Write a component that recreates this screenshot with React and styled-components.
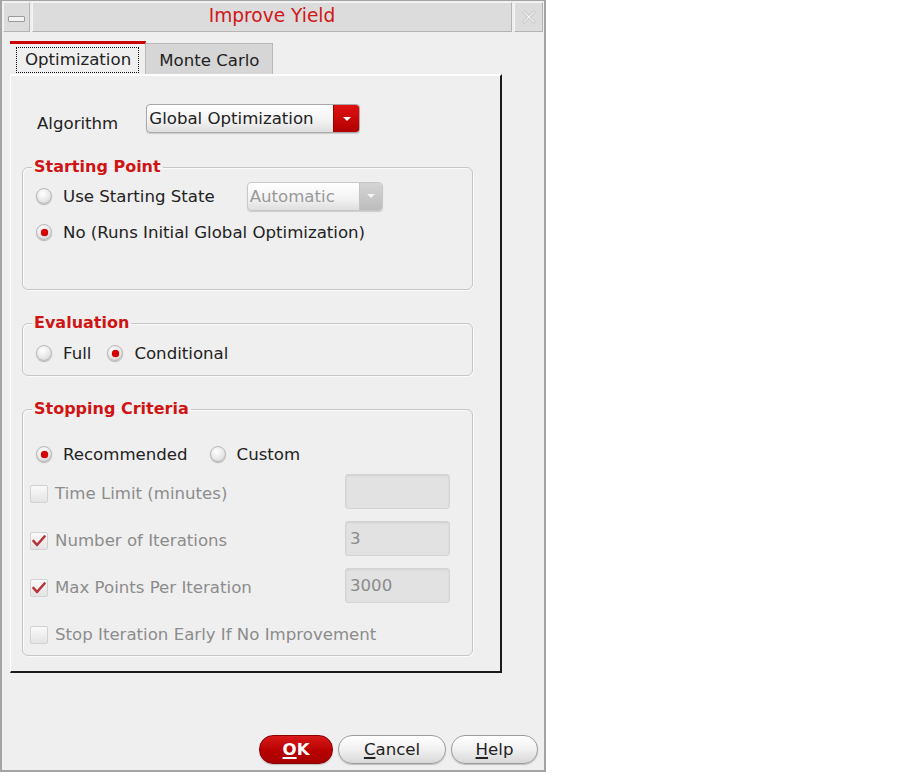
import React from 'react';
import styled, { createGlobalStyle } from 'styled-components';

const Global = createGlobalStyle`
  body {
    margin: 0;
    background: #ffffff;
    font-family: "DejaVu Sans", "Liberation Sans", sans-serif;
  }
`;

const Window = styled.div`
  width: 546px;
  height: 772px;
  box-sizing: border-box;
  border: 2px solid #a4a4a4;
  border-top-width: 1px;
  background: #efefef;
  display: flex;
  flex-direction: column;
`;

const TitleBar = styled.div`
  display: flex;
  gap: 2px;
  height: 30px;
  padding: 1px 1px 0 1px;
`;

const TitleBox = styled.div`
  box-sizing: border-box;
  width: ${p => p.w ? p.w + 'px' : 'auto'};
  flex: ${p => p.w ? 'none' : '1'};
  background: #dcdcdc;
  border: 1px solid #b4b4b4;
  border-top-color: #f4f4f4;
  border-left-color: #f4f4f4;
  display: flex;
  align-items: center;
  justify-content: center;
  padding-bottom: 3px;
  color: #d01818;
  font-size: 18.6px;
`;

const MinBar = styled.div`
  width: 15px;
  height: 4px;
  background: #f2f2f2;
  border: 1px solid #9a9a9a;
  border-radius: 1px;
  margin-top: 6px;
`;

const Body = styled.div`
  flex: 1;
  display: flex;
  flex-direction: column;
  padding: 9px 0 0 8px;
`;

const Tabs = styled.div`
  display: flex;
  align-items: flex-end;
  height: 33px;
`;

const Tab = styled.div`
  box-sizing: border-box;
  height: ${p => p.active ? '33px' : '31px'};
  padding: ${p => p.active ? '3px 6px 1px 6px' : '2px 13px 0 13px'};
  background: ${p => p.active ? '#efefef' : '#d6d6d6'};
  border-top: ${p => p.active ? '3px solid #cc0000' : '1px solid #b8b8b8'};
  border-right: 1px solid #b8b8b8;
  display: flex;
  align-items: center;
  font-size: 16.6px;
  color: #222;
`;

const FocusRing = styled.div`
  border: 1px dotted #111;
  padding: 2px 7px 3px 8px;
`;

const Panel = styled.div`
  box-sizing: border-box;
  width: 492px;
  height: 599px;
  border-top: 2px solid #ffffff;
  border-left: 1px solid #ffffff;
  border-right: 2px solid #1a1a1a;
  border-bottom: 2px solid #1a1a1a;
  padding: 28px 27px 0 11px;
  display: flex;
  flex-direction: column;
`;

const AlgoRow = styled.div`
  display: flex;
  align-items: center;
  padding-left: 15px;
  gap: 28px;
  font-size: 16.6px;
  color: #222;
  height: 29px;
`;

const AlgoLabel = styled.span`
  margin-top: 10px;
`;

const Combo = styled.div`
  box-sizing: border-box;
  width: ${p => p.w}px;
  height: ${p => p.h}px;
  display: flex;
  border: 1px solid ${p => p.disabled ? '#c8c8c8' : '#a8a8a8'};
  border-radius: 4px;
  overflow: hidden;
  background: linear-gradient(#ffffff, #f2f2f2 60%, #dedede);
  box-shadow: 0 1px 1px rgba(0, 0, 0, 0.15);
  font-size: 16.6px;
  color: ${p => p.disabled ? '#999' : '#222'};
`;

const ComboText = styled.div`
  flex: 1;
  display: flex;
  align-items: center;
  padding-left: 2px;
`;

const ComboArrow = styled.div`
  width: ${p => p.disabled ? 22 : 25}px;
  display: flex;
  align-items: center;
  justify-content: center;
  background: ${p => p.disabled ? 'linear-gradient(#d4d4d4, #bcbcbc)' : 'linear-gradient(#e01010, #b00000)'};
  border-left: 1px solid ${p => p.disabled ? '#c4c4c4' : '#900'};
`;

const Group = styled.fieldset`
  margin: ${p => p.top}px 0 0 0;
  padding: 0 22px 0 13px;
  height: ${p => p.h}px;
  box-sizing: border-box;
  border: 1px solid #c6c6c6;
  border-radius: 6px;
  box-shadow: inset 1px 1px 0 #fafafa, 1px 1px 0 #fafafa;
  display: flex;
  flex-direction: column;
  overflow: hidden;
`;

const Legend = styled.legend`
  padding: 0 2px;
  margin-left: -4px;
  font-size: 16px;
  font-weight: bold;
  color: #d01414;
  line-height: 20px;
`;

const Row = styled.div`
  display: flex;
  flex: none;
  align-items: center;
  height: ${p => p.h || 36}px;
  font-size: 16.6px;
  color: ${p => p.disabled ? '#8c8c8c' : '#222'};
  margin-left: ${p => p.indent || 0}px;
`;

const Spacer = styled.div`
  height: ${p => p.h || 1}px;
  width: ${p => p.w || 0}px;
  flex: none;
`;

const RadioItem = styled.label`
  display: flex;
  align-items: center;
  gap: 11px;
  margin-right: ${p => p.mr || 0}px;
`;

const RadioDot = styled.span`
  width: 16px;
  height: 16px;
  box-sizing: border-box;
  border-radius: 50%;
  border: 1px solid #b8b8b8;
  background: radial-gradient(circle at 40% 35%, #ffffff, #e6e6e6 60%, #c4c4c4);
  box-shadow: 0 1px 1px rgba(0, 0, 0, 0.25);
  display: flex;
  align-items: center;
  justify-content: center;
  &::after {
    content: '';
    display: ${p => p.checked ? 'block' : 'none'};
    width: 7px;
    height: 7px;
    border-radius: 50%;
    background: #d80000;
    box-shadow: 0 0 1px #800;
  }
`;

const CheckBox = styled.span`
  width: 18px;
  height: 18px;
  box-sizing: border-box;
  border: 1px solid #d2d2d2;
  border-radius: 2px;
  background: linear-gradient(#fafafa, #e4e4e4);
  display: flex;
  align-items: center;
  justify-content: center;
  margin-right: 7px;
`;

const Label = styled.span`
  flex: 1;
`;

const Field = styled.div`
  box-sizing: border-box;
  width: 105px;
  height: 35px;
  margin-top: -5px;
  border: 1px solid #d4d4d4;
  border-radius: 3px;
  background: #e2e2e2;
  box-shadow: inset 0 1px 2px rgba(0, 0, 0, 0.08);
  display: flex;
  align-items: center;
  padding-left: 4px;
  color: #8c8c8c;
  font-size: 16.6px;
`;

const Footer = styled.div`
  flex: 1;
  display: flex;
  justify-content: flex-end;
  align-items: flex-end;
  gap: 5px;
  padding: 0 6px 6px 0;
`;

const Button = styled.button`
  box-sizing: border-box;
  width: ${p => p.w}px;
  height: 29px;
  border-radius: 14px;
  font-family: inherit;
  font-size: 16.6px;
  padding: 0;
  border: 1px solid ${p => p.primary ? '#8a0000' : '#9c9c9c'};
  background: ${p => p.primary
    ? 'linear-gradient(#d81a1a, #b80000 55%, #a80000)'
    : 'linear-gradient(#ffffff, #f0f0f0 50%, #d8d8d8)'};
  color: ${p => p.primary ? '#ffffff' : '#222'};
  font-weight: ${p => p.primary ? 'bold' : 'normal'};
  box-shadow: 0 1px 1px rgba(0, 0, 0, 0.2);
  u { text-decoration-thickness: 2px; text-underline-offset: 2px; }
`;

const ArrowDown = ({ color }) => (
  <svg width="10" height="6" viewBox="0 0 10 6">
    <path d="M1 1 L9 1 L5 5 Z" fill={color} />
  </svg>
);

const Check = () => (
  <svg width="14" height="12" viewBox="0 0 14 12">
    <path d="M1.5 6 L5 10 L12.5 1.5" fill="none" stroke="#b8323a" strokeWidth="2.6" strokeLinecap="round" strokeLinejoin="round" />
  </svg>
);

const Radio = ({ checked, children, mr }) => (
  <RadioItem mr={mr}>
    <RadioDot checked={checked} />
    {children}
  </RadioItem>
);

const CheckRow = ({ checked, label, value, hasField }) => (
  <Row h={47} disabled indent={-6}>
    <CheckBox>{checked && <Check />}</CheckBox>
    <Label>{label}</Label>
    {hasField && <Field>{value}</Field>}
  </Row>
);

export default function App() {
  return (
    <>
      <Global />
      <Window>
        <TitleBar>
          <TitleBox w={27}><MinBar /></TitleBox>
          <TitleBox>Improve Yield</TitleBox>
          <TitleBox w={29}>
            <svg width="16" height="16" viewBox="0 0 16 16" style={{ marginTop: 3 }}>
              <path d="M3 3 L13 13 M13 3 L3 13" stroke="#c4c4c4" strokeWidth="3" strokeLinecap="round" />
              <path d="M3 3 L13 13 M13 3 L3 13" stroke="#f4f4f4" strokeWidth="1.2" strokeLinecap="round" />
            </svg>
          </TitleBox>
        </TitleBar>
        <Body>
          <Tabs>
            <Tab active>
              <FocusRing>Optimization</FocusRing>
            </Tab>
            <Tab>Monte Carlo</Tab>
          </Tabs>
          <Panel>
            <AlgoRow>
              <AlgoLabel>Algorithm</AlgoLabel>
              <Combo w={214} h={29}>
                <ComboText>Global Optimization</ComboText>
                <ComboArrow><ArrowDown color="#ffffff" /></ComboArrow>
              </Combo>
            </AlgoRow>

            <Group top={24} h={133}>
              <Legend>Starting Point</Legend>
              <Spacer h={1} />
              <Row>
                <Radio>Use Starting State</Radio>
                <Spacer w={32} />
                <Combo w={136} h={29} disabled>
                  <ComboText>Automatic</ComboText>
                  <ComboArrow disabled><ArrowDown color="#f4f4f4" /></ComboArrow>
                </Combo>
              </Row>
              <Row>
                <Radio checked>No (Runs Initial Global Optimization)</Radio>
              </Row>
            </Group>

            <Group top={23} h={63}>
              <Legend>Evaluation</Legend>
              <Row h={40}>
                <Radio mr={16}>Full</Radio>
                <Radio checked>Conditional</Radio>
              </Row>
            </Group>

            <Group top={23} h={257}>
              <Legend>Stopping Criteria</Legend>
              <Spacer h={19} />
              <Row h={32}>
                <Radio checked mr={22}>Recommended</Radio>
                <Radio>Custom</Radio>
              </Row>
              <CheckRow label="Time Limit (minutes)" hasField />
              <CheckRow checked label="Number of Iterations" value="3" hasField />
              <CheckRow checked label="Max Points Per Iteration" value="3000" hasField />
              <CheckRow label="Stop Iteration Early If No Improvement" />
            </Group>
          </Panel>
          <Footer>
            <Button primary w={74}><u>O</u>K</Button>
            <Button w={108}><u>C</u>ancel</Button>
            <Button w={87}><u>H</u>elp</Button>
          </Footer>
        </Body>
      </Window>
    </>
  );
}
